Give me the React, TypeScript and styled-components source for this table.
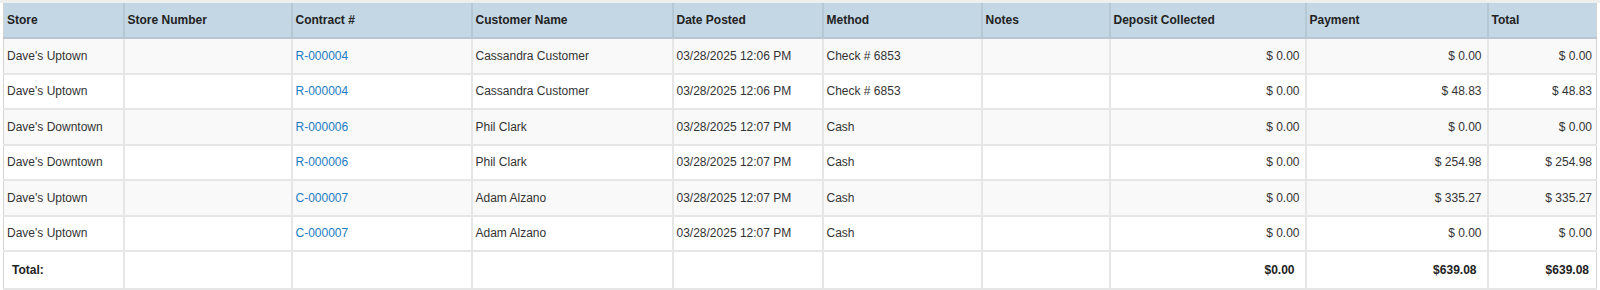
import styled, { createGlobalStyle } from "styled-components";

const GlobalStyle = createGlobalStyle`
  html, body {
    margin: 0;
    padding: 0;
    background: #ffffff;
  }
  body {
    font-family: "Liberation Sans", Arial, sans-serif;
    font-size: 12px;
    color: #333333;
  }
`;

type Align = "left" | "right";

type Column = {
  title: string;
  width: number;
};

type Payment = {
  store: string;
  storeNumber: string;
  contract: string;
  customer: string;
  posted: string;
  method: string;
  notes: string;
  deposit: string;
  payment: string;
  total: string;
};

const columns: Column[] = [
  { title: "Store", width: 120 },
  { title: "Store Number", width: 168 },
  { title: "Contract #", width: 180 },
  { title: "Customer Name", width: 201 },
  { title: "Date Posted", width: 150 },
  { title: "Method", width: 159 },
  { title: "Notes", width: 128 },
  { title: "Deposit Collected", width: 196 },
  { title: "Payment", width: 182 },
  { title: "Total", width: 109 },
];

const rows: Payment[] = [
  {
    store: "Dave's Uptown",
    storeNumber: "",
    contract: "R-000004",
    customer: "Cassandra Customer",
    posted: "03/28/2025 12:06 PM",
    method: "Check # 6853",
    notes: "",
    deposit: "$ 0.00",
    payment: "$ 0.00",
    total: "$ 0.00",
  },
  {
    store: "Dave's Uptown",
    storeNumber: "",
    contract: "R-000004",
    customer: "Cassandra Customer",
    posted: "03/28/2025 12:06 PM",
    method: "Check # 6853",
    notes: "",
    deposit: "$ 0.00",
    payment: "$ 48.83",
    total: "$ 48.83",
  },
  {
    store: "Dave's Downtown",
    storeNumber: "",
    contract: "R-000006",
    customer: "Phil Clark",
    posted: "03/28/2025 12:07 PM",
    method: "Cash",
    notes: "",
    deposit: "$ 0.00",
    payment: "$ 0.00",
    total: "$ 0.00",
  },
  {
    store: "Dave's Downtown",
    storeNumber: "",
    contract: "R-000006",
    customer: "Phil Clark",
    posted: "03/28/2025 12:07 PM",
    method: "Cash",
    notes: "",
    deposit: "$ 0.00",
    payment: "$ 254.98",
    total: "$ 254.98",
  },
  {
    store: "Dave's Uptown",
    storeNumber: "",
    contract: "C-000007",
    customer: "Adam Alzano",
    posted: "03/28/2025 12:07 PM",
    method: "Cash",
    notes: "",
    deposit: "$ 0.00",
    payment: "$ 335.27",
    total: "$ 335.27",
  },
  {
    store: "Dave's Uptown",
    storeNumber: "",
    contract: "C-000007",
    customer: "Adam Alzano",
    posted: "03/28/2025 12:07 PM",
    method: "Cash",
    notes: "",
    deposit: "$ 0.00",
    payment: "$ 0.00",
    total: "$ 0.00",
  },
];

const StyledFrame = styled.div`
  border-top: 3px solid #eeeeee;
  padding: 0 3px;
`;

const StyledTable = styled.table`
  width: 1593px;
  table-layout: fixed;
  border-collapse: collapse;
  border-left: 1px solid #d4d4d4;
  border-right: 1px solid #d4d4d4;
  border-bottom: 3px solid #e6e6e6;
`;

const StyledHeadCell = styled.th`
  height: 34px;
  padding: 0 3px;
  background: #c4d7e5;
  border-right: 2px solid #b6c8d4;
  border-bottom: 2px solid #b9c6cf;
  text-align: left;
  font-weight: bold;
  font-size: 12px;
  color: #222222;
  white-space: nowrap;
  overflow: hidden;

  &:last-child {
    border-right: none;
  }
`;

const StyledRow = styled.tr<{ $striped: boolean }>`
  background: ${(props) => (props.$striped ? "#f9f9f9" : "#ffffff")};
`;

const StyledCell = styled.td<{ $align?: Align }>`
  height: 33.5px;
  padding: 0 5px 0 3px;
  border-right: 2px solid #e6e6e6;
  border-bottom: 2px solid #e6e6e6;
  text-align: ${(props) => props.$align || "left"};
  white-space: nowrap;
  overflow: hidden;
  color: #333333;

  &:last-child {
    border-right: none;
    padding-right: 4px;
  }
`;

const StyledLink = styled.a`
  color: #1c7cc3;
  text-decoration: none;

  &:hover {
    text-decoration: underline;
  }
`;

const StyledFootCell = styled.td<{ $align?: Align }>`
  height: 36px;
  padding: 0 10px;
  border-right: 2px solid #e6e6e6;
  text-align: ${(props) => props.$align || "left"};
  font-weight: bold;
  color: #222222;
  white-space: nowrap;
  background: #ffffff;

  &:first-child {
    padding-left: 8px;
  }

  &:last-child {
    border-right: none;
    padding-right: 7px;
  }
`;

export default function App() {
  return (
    <>
      <GlobalStyle />
      <StyledFrame>
        <StyledTable>
          <colgroup>
            {columns.map((col) => (
              <col key={col.title} style={{ width: col.width }} />
            ))}
          </colgroup>
          <thead>
            <tr>
              {columns.map((col) => (
                <StyledHeadCell key={col.title}>{col.title}</StyledHeadCell>
              ))}
            </tr>
          </thead>
          <tbody>
            {rows.map((row, i) => (
              <StyledRow key={i} $striped={i % 2 === 0}>
                <StyledCell>{row.store}</StyledCell>
                <StyledCell>{row.storeNumber}</StyledCell>
                <StyledCell>
                  <StyledLink href="#">{row.contract}</StyledLink>
                </StyledCell>
                <StyledCell>{row.customer}</StyledCell>
                <StyledCell>{row.posted}</StyledCell>
                <StyledCell>{row.method}</StyledCell>
                <StyledCell>{row.notes}</StyledCell>
                <StyledCell $align="right">{row.deposit}</StyledCell>
                <StyledCell $align="right">{row.payment}</StyledCell>
                <StyledCell $align="right">{row.total}</StyledCell>
              </StyledRow>
            ))}
          </tbody>
          <tfoot>
            <tr>
              <StyledFootCell>Total:</StyledFootCell>
              <StyledFootCell />
              <StyledFootCell />
              <StyledFootCell />
              <StyledFootCell />
              <StyledFootCell />
              <StyledFootCell />
              <StyledFootCell $align="right">$0.00</StyledFootCell>
              <StyledFootCell $align="right">$639.08</StyledFootCell>
              <StyledFootCell $align="right">$639.08</StyledFootCell>
            </tr>
          </tfoot>
        </StyledTable>
      </StyledFrame>
    </>
  );
}
